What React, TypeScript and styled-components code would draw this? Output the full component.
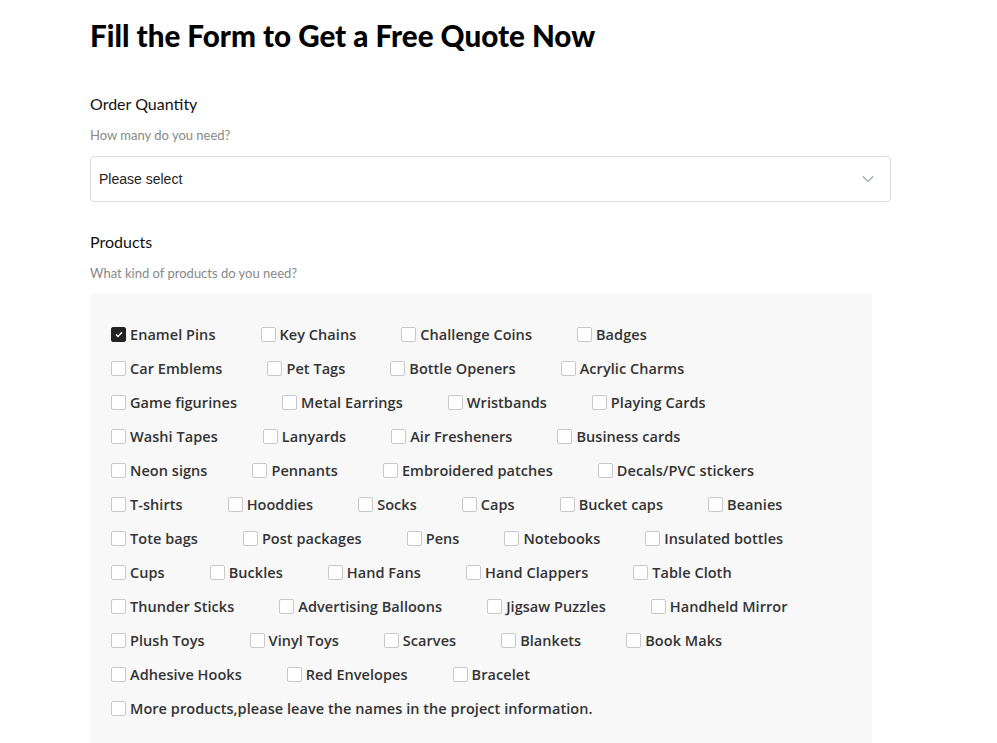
import React from 'react'
import styled, { createGlobalStyle } from 'styled-components'

const GlobalStyle = createGlobalStyle`
	html, body {
		margin: 0;
		padding: 0;
		background: #ffffff;
	}
	body {
		font-family: 'Lato', 'Liberation Sans', sans-serif;
		color: #222;
	}
`

const ROWS: string[][] = [
	['Enamel Pins', 'Key Chains', 'Challenge Coins', 'Badges'],
	['Car Emblems', 'Pet Tags', 'Bottle Openers', 'Acrylic Charms'],
	['Game figurines', 'Metal Earrings', 'Wristbands', 'Playing Cards'],
	['Washi Tapes', 'Lanyards', 'Air Fresheners', 'Business cards'],
	['Neon signs', 'Pennants', 'Embroidered patches', 'Decals/PVC stickers'],
	['T-shirts', 'Hooddies', 'Socks', 'Caps', 'Bucket caps', 'Beanies'],
	['Tote bags', 'Post packages', 'Pens', 'Notebooks', 'Insulated bottles'],
	['Cups', 'Buckles', 'Hand Fans', 'Hand Clappers', 'Table Cloth'],
	['Thunder Sticks', 'Advertising Balloons', 'Jigsaw Puzzles', 'Handheld Mirror'],
	['Plush Toys', 'Vinyl Toys', 'Scarves', 'Blankets', 'Book Maks'],
	['Adhesive Hooks', 'Red Envelopes', 'Bracelet'],
	['More products,please leave the names in the project information.'],
]

const App = () => {
	return (
		<>
			<GlobalStyle />
			<Page>
				<Title>Fill the Form to Get a Free Quote Now</Title>

				<Field>
					<Label>Order Quantity</Label>
					<Hint>How many do you need?</Hint>
					<Select>
						<span>Please select</span>
						<svg width='12' height='8' viewBox='0 0 12 8' fill='none'>
							<path d='M1 1.5 L6 6.5 L11 1.5' stroke='#9aa0a8' strokeWidth='1.1' />
						</svg>
					</Select>
				</Field>

				<Field>
					<Label>Products</Label>
					<Hint>What kind of products do you need?</Hint>
					<Panel>
						{ROWS.map((row, i) => (
							<Row key={i}>
								{row.map(name => (
									<Option key={name}>
										<Box $checked={name === 'Enamel Pins'}>
											{name === 'Enamel Pins' && (
												<svg width='8' height='7' viewBox='0 0 8 7' fill='none'>
													<path d='M1 3.6 L3 5.5 L7 1.2' stroke='#fff' strokeWidth='1.4' />
												</svg>
											)}
										</Box>
										{name}
									</Option>
								))}
							</Row>
						))}
					</Panel>
				</Field>
			</Page>
		</>
	)
}

export default App

const Page = styled.div`
	width: 801px;
	padding: 16px 0 0 90px;
`

const Title = styled.h1`
	margin: 0 0 36px;
	font-family: 'Lato', 'Liberation Sans', sans-serif;
	font-weight: 900;
	font-size: 29.6px;
	line-height: 40px;
	color: #000;
`

const Field = styled.div`
	display: flex;
	flex-direction: column;
	margin-bottom: 28px;
`

const Label = styled.div`
	font-size: 16px;
	line-height: 24px;
	color: #111;
`

const Hint = styled.div`
	margin-top: 10px;
	font-size: 13px;
	line-height: 18px;
	color: #888;
	margin-bottom: 12px;
`

const Select = styled.div`
	display: flex;
	align-items: center;
	justify-content: space-between;
	height: 44px;
	padding: 0 16px 0 8px;
	border: 1px solid #dcdcdc;
	border-radius: 4px;
	font-family: 'Liberation Sans', Arial, sans-serif;
	font-size: 14px;
	color: #222;
`

const Panel = styled.div`
	width: 782px;
	box-sizing: border-box;
	padding: 23px 21px 40px;
	background: #f8f8f8;
	display: flex;
	flex-direction: column;
`

const Row = styled.div`
	display: flex;
	align-items: center;
	height: 34px;
`

const Option = styled.label`
	display: flex;
	align-items: center;
	gap: 4px;
	margin-right: 45px;
	font-family: 'Open Sans', 'Liberation Sans', sans-serif;
	font-weight: 600;
	font-size: 14.5px;
	letter-spacing: 0.05px;
	color: #333;
	white-space: nowrap;
`

const Box = styled.span<{ $checked?: boolean }>`
	display: inline-flex;
	align-items: center;
	justify-content: center;
	width: 13px;
	height: 13px;
	border: 1px solid ${p => (p.$checked ? '#222' : '#c8c8c8')};
	border-radius: 2px;
	background: ${p => (p.$checked ? '#222' : '#fff')};
`
